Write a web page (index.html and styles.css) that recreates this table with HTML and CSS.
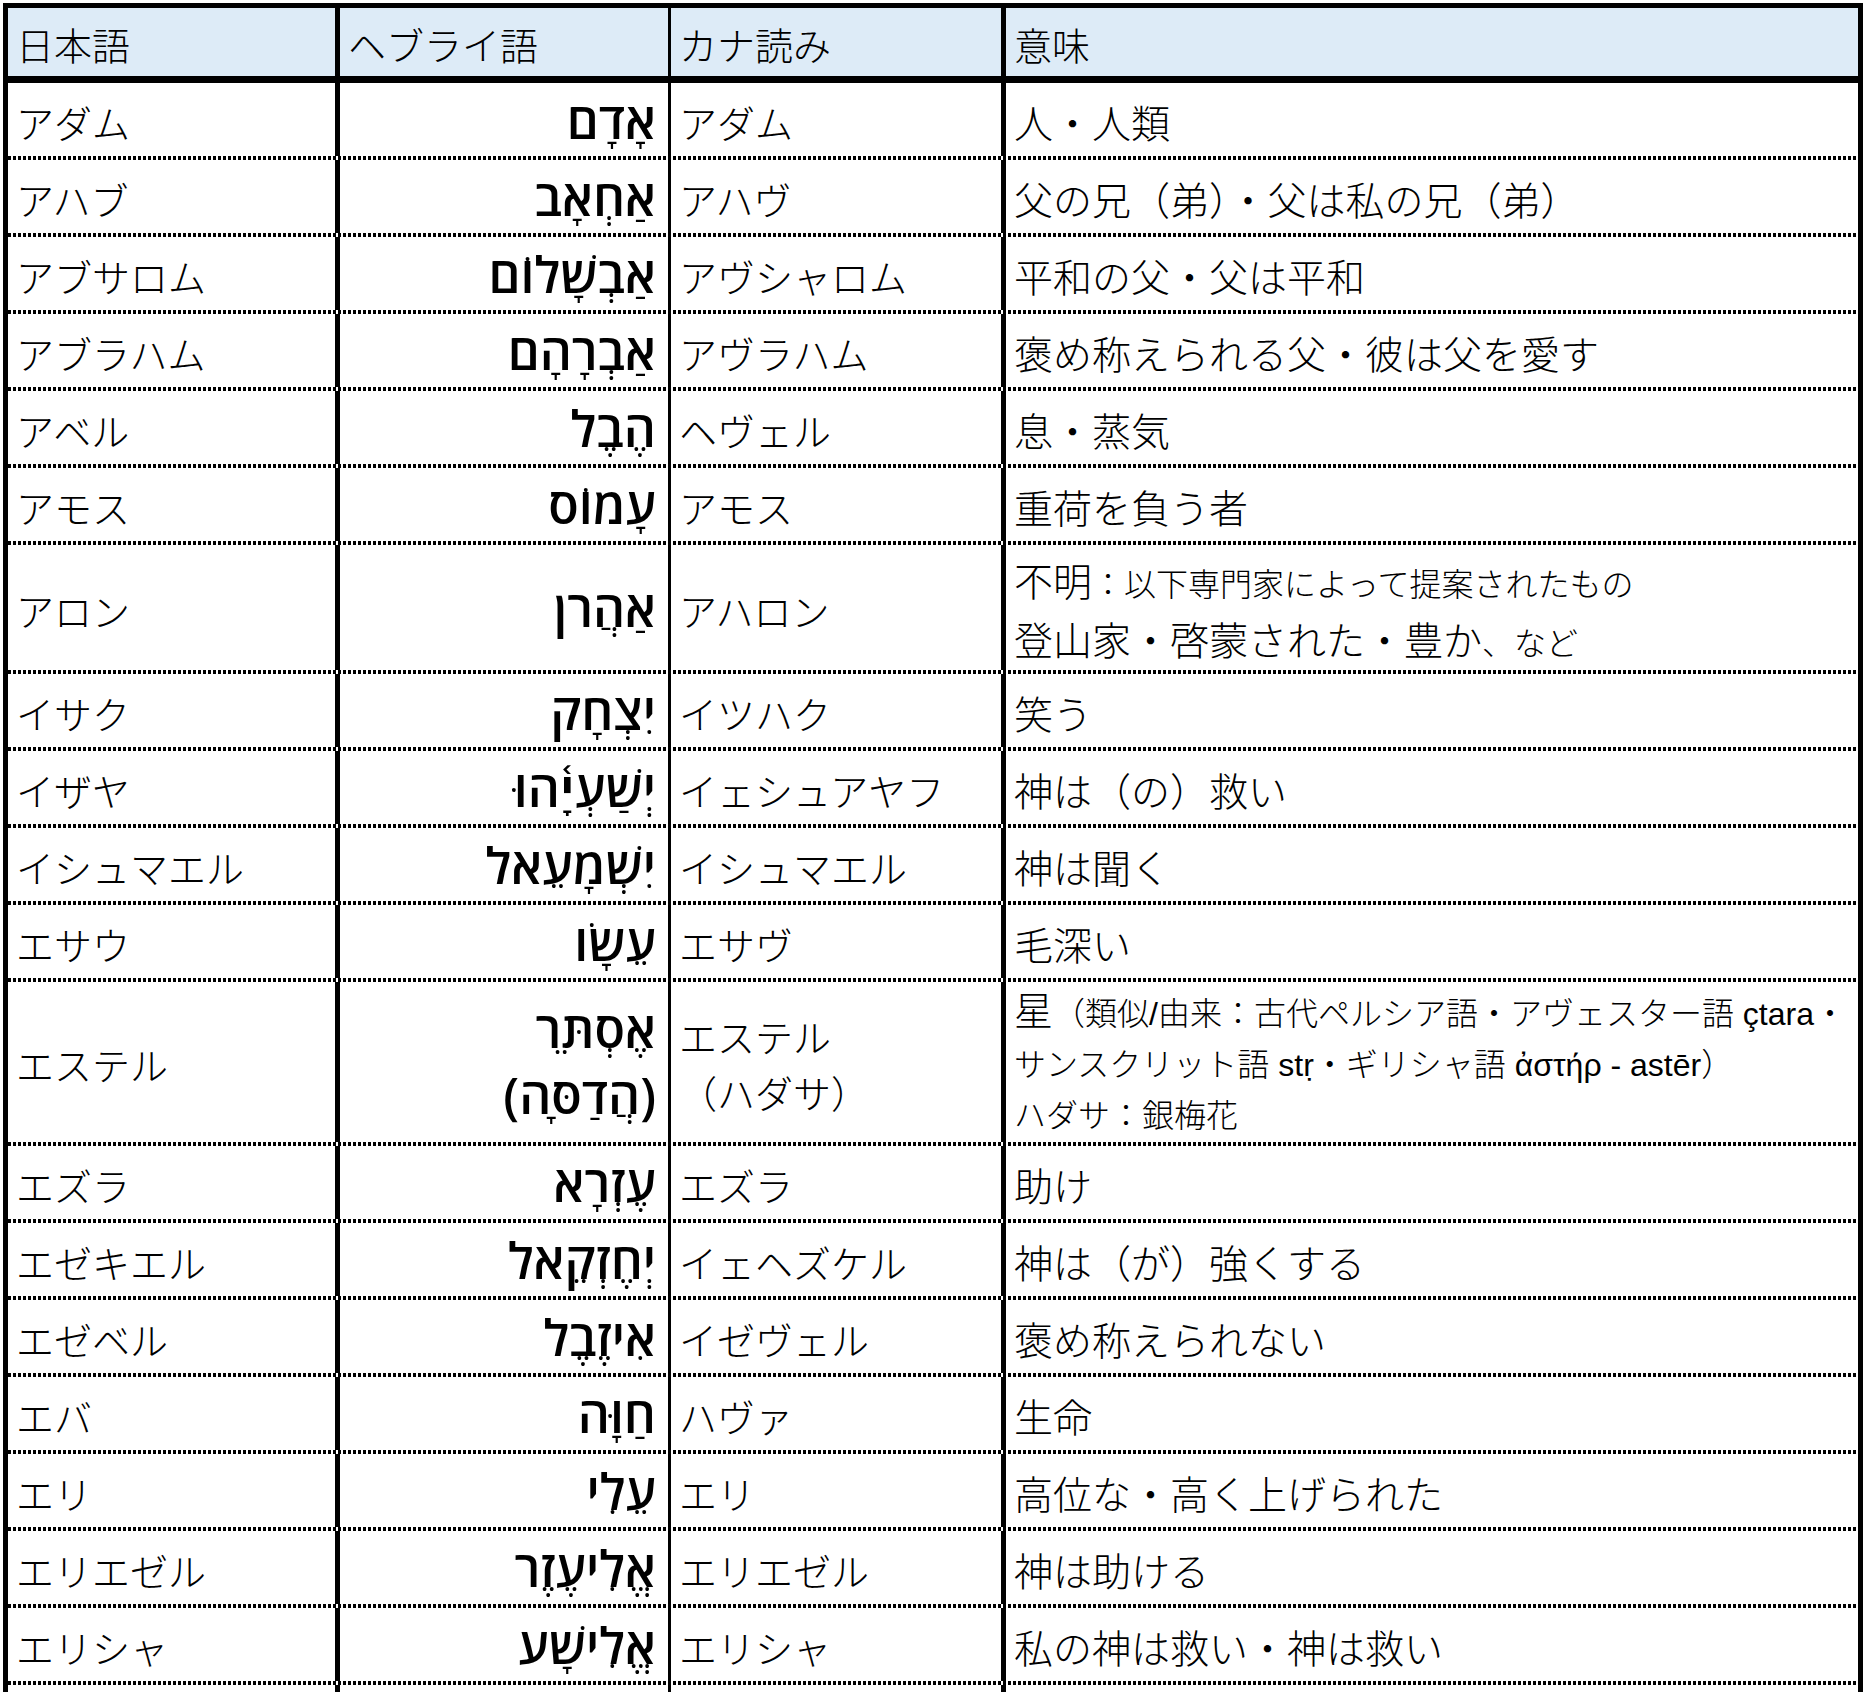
FILE: index.html
```html
<!DOCTYPE html>
<html lang="ja">
<head>
<meta charset="utf-8">
<title>聖書の人名</title>
<link rel="stylesheet" href="styles.css">
</head>
<body>
<div class="table">
  <div class="row head">
    <div class="c c1">日本語</div>
    <div class="c c2">ヘブライ語</div>
    <div class="c c3">カナ読み</div>
    <div class="c c4">意味</div>
  </div>
  <div class="row"><div class="c c1">アダム</div><div class="c c2 heb" dir="rtl">אָדָם</div><div class="c c3">アダム</div><div class="c c4">人・人類</div></div>
  <div class="row"><div class="c c1">アハブ</div><div class="c c2 heb" dir="rtl">אַחְאָב</div><div class="c c3">アハヴ</div><div class="c c4">父の兄（弟）・父は私の兄（弟）</div></div>
  <div class="row"><div class="c c1">アブサロム</div><div class="c c2 heb" dir="rtl">אַבְשָׁלוֹם</div><div class="c c3">アヴシャロム</div><div class="c c4">平和の父・父は平和</div></div>
  <div class="row"><div class="c c1">アブラハム</div><div class="c c2 heb" dir="rtl">אַבְרָהָם</div><div class="c c3">アヴラハム</div><div class="c c4">褒め称えられる父・彼は父を愛す</div></div>
  <div class="row"><div class="c c1">アベル</div><div class="c c2 heb" dir="rtl">הֶבֶל</div><div class="c c3">ヘヴェル</div><div class="c c4">息・蒸気</div></div>
  <div class="row"><div class="c c1">アモス</div><div class="c c2 heb" dir="rtl">עָמוֹס</div><div class="c c3">アモス</div><div class="c c4">重荷を負う者</div></div>
  <div class="row tall2"><div class="c c1">アロン</div><div class="c c2 heb" dir="rtl">אַהֲרֹן</div><div class="c c3">アハロン</div><div class="c c4 lines2"><div>不明<span class="sm">：以下専門家によって提案されたもの</span></div><div>登山家・啓蒙された・豊か<span class="sm">、など</span></div></div></div>
  <div class="row"><div class="c c1">イサク</div><div class="c c2 heb" dir="rtl">יִצְחָק</div><div class="c c3">イツハク</div><div class="c c4">笑う</div></div>
  <div class="row"><div class="c c1">イザヤ</div><div class="c c2 heb" dir="rtl">יְשַׁעְיָ֫הוּ</div><div class="c c3">イェシュアヤフ</div><div class="c c4">神は（の）救い</div></div>
  <div class="row"><div class="c c1">イシュマエル</div><div class="c c2 heb" dir="rtl">יִשְׁמָעֵאל</div><div class="c c3">イシュマエル</div><div class="c c4">神は聞く</div></div>
  <div class="row"><div class="c c1">エサウ</div><div class="c c2 heb" dir="rtl">עֵשָׂו</div><div class="c c3">エサヴ</div><div class="c c4">毛深い</div></div>
  <div class="row tall3"><div class="c c1">エステル</div><div class="c c2 heb hlines" dir="rtl"><div>אֶסְתֵּר</div><div>(הֲדַסָּה)</div></div><div class="c c3 klines"><div>エステル</div><div>（ハダサ）</div></div><div class="c c4 lines3"><div>星<span class="sm">（類似/由来：古代ペルシア語・アヴェスター語 çtara・</span></div><div class="sm">サンスクリット語 stṛ・ギリシャ語 ἀστήρ - astēr）</div><div class="sm">ハダサ：銀梅花</div></div></div>
  <div class="row"><div class="c c1">エズラ</div><div class="c c2 heb" dir="rtl">עֶזְרָא</div><div class="c c3">エズラ</div><div class="c c4">助け</div></div>
  <div class="row"><div class="c c1">エゼキエル</div><div class="c c2 heb" dir="rtl">יְחֶזְקֵאל</div><div class="c c3">イェヘズケル</div><div class="c c4">神は（が）強くする</div></div>
  <div class="row"><div class="c c1">エゼベル</div><div class="c c2 heb" dir="rtl">אִיזֶבֶל</div><div class="c c3">イゼヴェル</div><div class="c c4">褒め称えられない</div></div>
  <div class="row"><div class="c c1">エバ</div><div class="c c2 heb" dir="rtl">חַוָּה</div><div class="c c3">ハヴァ</div><div class="c c4">生命</div></div>
  <div class="row"><div class="c c1">エリ</div><div class="c c2 heb" dir="rtl">עֵלִי</div><div class="c c3">エリ</div><div class="c c4">高位な・高く上げられた</div></div>
  <div class="row"><div class="c c1">エリエゼル</div><div class="c c2 heb" dir="rtl">אֱלִיעֶזֶר</div><div class="c c3">エリエゼル</div><div class="c c4">神は助ける</div></div>
  <div class="row"><div class="c c1">エリシャ</div><div class="c c2 heb" dir="rtl">אֱלִישָׁע</div><div class="c c3">エリシャ</div><div class="c c4">私の神は救い・神は救い</div></div>
  <div class="row tail"><div class="c c1"></div><div class="c c2"></div><div class="c c3"></div><div class="c c4"></div></div>
</div>
</body>
</html>
```

FILE: styles.css
```css
html, body {
  margin: 0;
  padding: 0;
  background: #fff;
}
body {
  width: 1868px;
  height: 1692px;
  overflow: hidden;
  font-family: "Noto Sans CJK JP", sans-serif;
  color: #000;
}
.table {
  margin: 3px 0 0 3px;
  width: 1850px;
  border: 5px solid #000;
  border-bottom: none;
}
.row {
  display: grid;
  grid-template-columns: 332px 331px 335px 852px;
  height: 77px;
  box-sizing: border-box;
  padding-bottom: 4px;
  background: repeating-linear-gradient(90deg, #000 0 3px, transparent 3px 5px) left bottom / 100% 4px no-repeat;
}
.row.head {
  height: 75px;
  padding-bottom: 0;
  background: #ddebf7;
  border-bottom: 7px solid #000;
}
.row.tall2 { height: 129px; }
.row.tall3 { height: 164px; }
.row.tail { height: 20px; background: none; padding-bottom: 0; }
.c {
  box-sizing: border-box;
  display: flex;
  flex-direction: column;
  justify-content: center;
  align-items: flex-start;
  padding: 4px 0 0 8px;
  font-size: 38px;
  font-weight: 300;
  line-height: 1.2;
  white-space: nowrap;
}
.c1 { border-right: 5px solid #000; }
.c2 { border-right: 3px solid #000; }
.c3 { border-right: 5px solid #000; }
.c4 { font-size: 39px; }
.row.head .c4 { font-size: 38px; }
.heb {
  align-items: flex-start;
  padding: 0 12px 0 0;
  font-family: "Open Sans", "DejaVu Sans", sans-serif;
  font-size: 50px;
  font-weight: 550;
  line-height: 1.2;
}
.hlines { line-height: 66px; }
.klines { line-height: 56px; }
.lines2 { line-height: 56px; }
.lines3 { line-height: 51px; font-family: "Liberation Sans", "Noto Sans CJK JP", sans-serif; }
.sm { font-size: 32px; }
.lines3 .sm { font-family: "Liberation Sans", "Noto Sans CJK JP", sans-serif; }
```
